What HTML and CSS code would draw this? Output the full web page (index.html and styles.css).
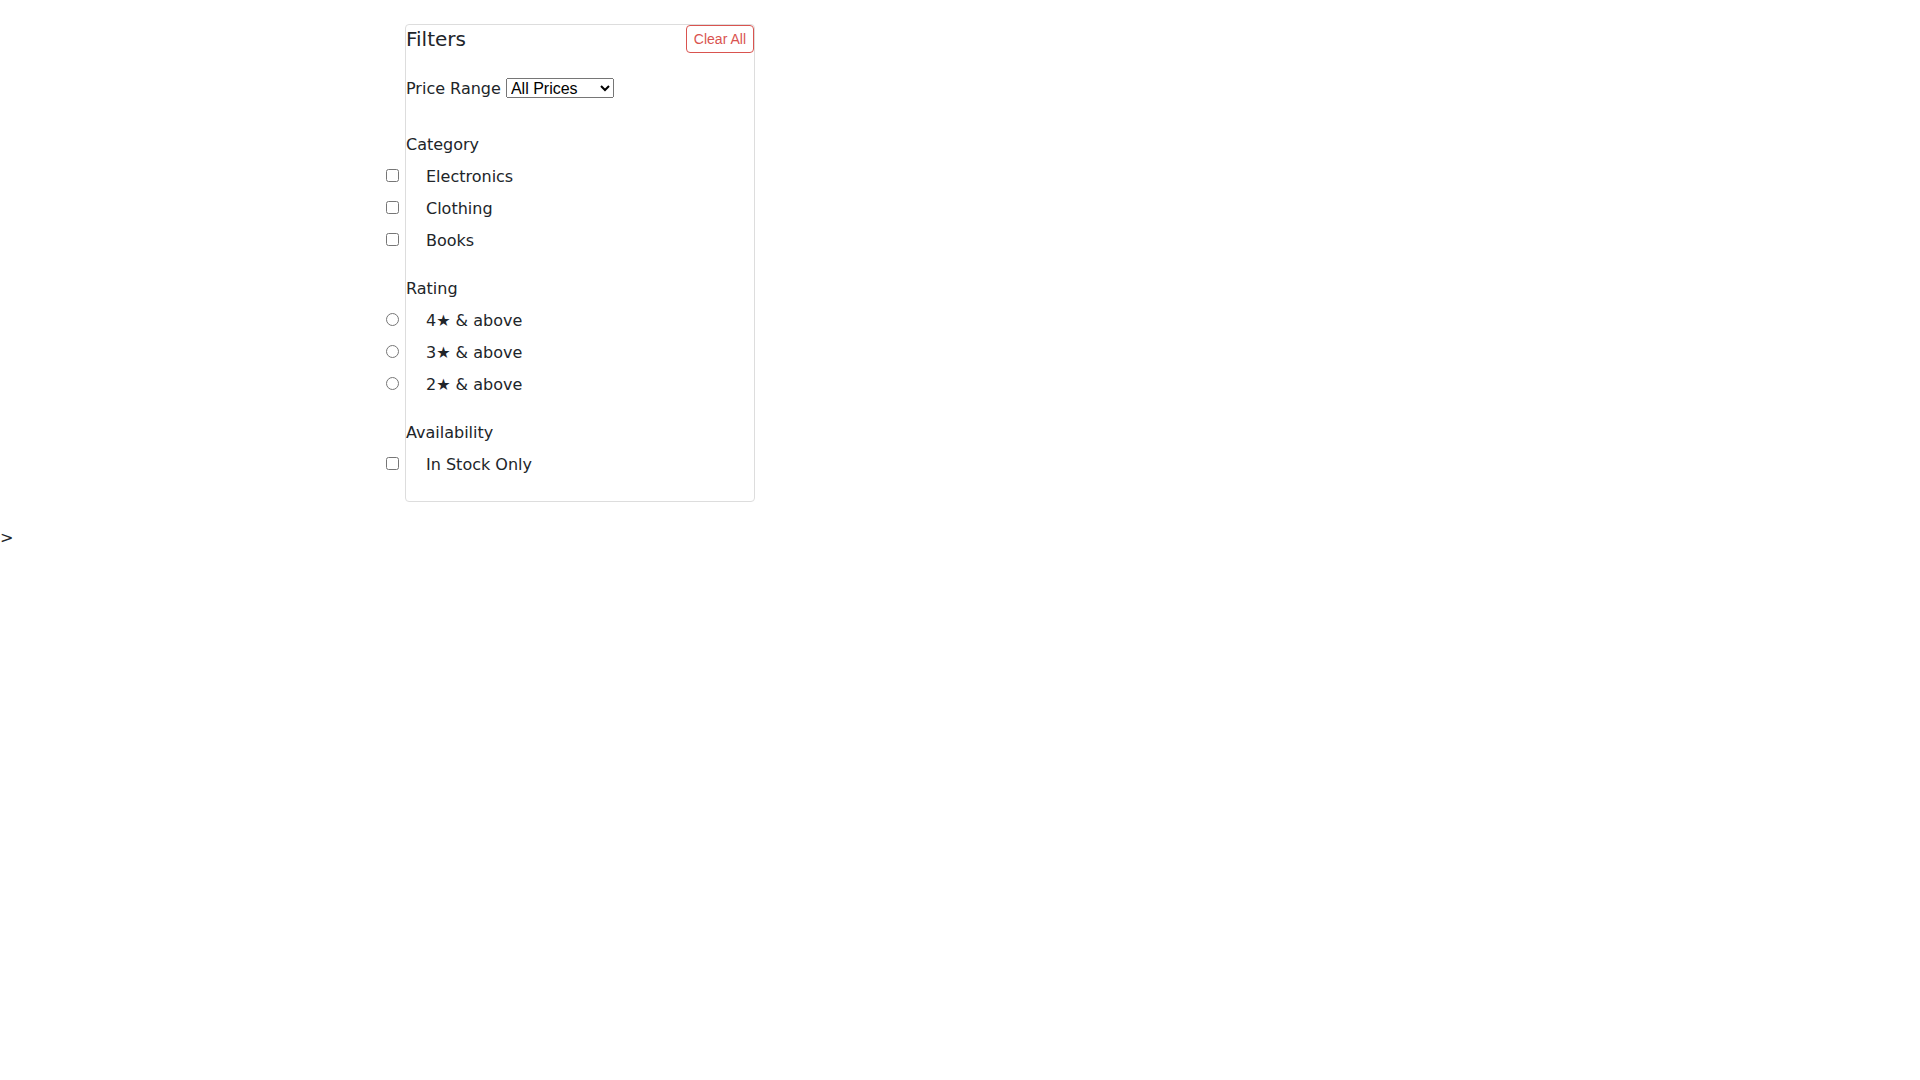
FILE: index.html
```html
<!DOCTYPE html>
<html lang="en">
<head>
    <meta charset="UTF-8">
    <meta name="viewport" content="width=device-width, initial-scale=1.0">
    <title>Filters</title>
    <link rel="stylesheet" href="styles.css">
</head>
<body>

    <div class="container">
        <!-- filter panel -->
        <div class="filter-panel">
            <div class="filter-header">
                <h5>Filters</h5>
                <button class="clear-btn">Clear All</button>
            </div>

            <div class="filter-section price-section">
                <label for="price">Price Range</label>
                <select id="price">
                    <option>All Prices</option>
                    <option>Under $25</option>
                    <option>$25 - $50</option>
                    <option>$50 - $100</option>
                    <option>Over $100</option>
                </select>
            </div>

            <div class="filter-section">
                <div class="section-title">Category</div>
                <div class="filter-item"><input type="checkbox" id="cat1"><label for="cat1">Electronics</label></div>
                <div class="filter-item"><input type="checkbox" id="cat2"><label for="cat2">Clothing</label></div>
                <div class="filter-item"><input type="checkbox" id="cat3"><label for="cat3">Books</label></div>
            </div>

            <div class="filter-section">
                <div class="section-title">Rating</div>
                <div class="filter-item"><input type="radio" name="rating" id="r4"><label for="r4">4★ &amp; above</label></div>
                <div class="filter-item"><input type="radio" name="rating" id="r3"><label for="r3">3★ &amp; above</label></div>
                <div class="filter-item"><input type="radio" name="rating" id="r2"><label for="r2">2★ &amp; above</label></div>
            </div>

            <div class="filter-section">
                <div class="section-title">Availability</div>
                <div class="filter-item"><input type="checkbox" id="stock"><label for="stock">In Stock Only</label></div>
            </div>
        </div>
    </div>
    &gt;

</body>
</html>
```

FILE: styles.css
```css
* {
    box-sizing: border-box;
}

body {
    font-family: "DejaVu Sans", sans-serif;
    font-size: 16px;
    line-height: 1.5;
    color: #212529;
    margin: 0;
    background-color: #fff;
}

.container {
    max-width: 1140px;
    margin: 24px auto 0;
    padding: 0 15px;
}

.filter-panel {
    width: 350px;
    border: 1px solid #ddd;
    border-radius: 4px;
    margin-bottom: 24px;
}

.filter-header {
    display: flex;
    justify-content: space-between;
    align-items: flex-start;
    margin-bottom: 24px;
}

.filter-header h5 {
    margin: 0;
    font-size: 20px;
    font-weight: normal;
    line-height: 28px;
}

.clear-btn {
    font-family: "Liberation Sans", Arial, sans-serif;
    font-size: 14px;
    color: #d9534f;
    background: #fff;
    border: 1px solid #d9534f;
    border-radius: 4px;
    padding: 5px 7px;
    cursor: pointer;
}

.clear-btn:hover {
    background: #d9534f;
    color: white;
}

.filter-section {
    margin-bottom: 24px;
}

.price-section {
    margin-bottom: 32px;
}

.price-section select {
    font-family: "Liberation Sans", Arial, sans-serif;
    font-size: 16px;
    width: 108px;
    height: 20px;
    padding: 0;
}

.section-title {
    margin-bottom: 8px;
}

.filter-item {
    display: flex;
    align-items: flex-start;
    margin-bottom: 8px;
}

.filter-item:last-child {
    margin-bottom: 0;
}

.filter-item input {
    margin: 4px 27px 0 -20px;
    width: 13px;
    height: 13px;
}
```
